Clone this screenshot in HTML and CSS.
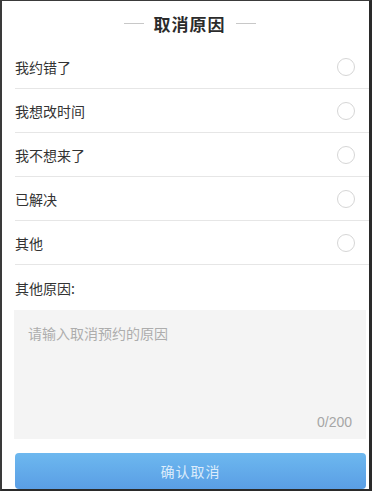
FILE: index.html
```html
<!DOCTYPE html>
<html lang="zh">
<head>
<meta charset="utf-8">
<link rel="stylesheet" href="styles.css">
</head>
<body>
<div class="frame">
  <div class="title">
    <span class="dash"></span>
    <span class="title-text">取消原因</span>
    <span class="dash"></span>
  </div>
  <ul class="options">
    <li class="option"><span>我约错了</span><span class="radio"></span></li>
    <li class="option"><span>我想改时间</span><span class="radio"></span></li>
    <li class="option"><span>我不想来了</span><span class="radio"></span></li>
    <li class="option"><span>已解决</span><span class="radio"></span></li>
    <li class="option"><span>其他</span><span class="radio"></span></li>
  </ul>
  <div class="label">其他原因:</div>
  <div class="textarea">
    <div class="placeholder">请输入取消预约的原因</div>
    <div class="count">0/200</div>
  </div>
  <div class="button">确认取消</div>
</div>
</body>
</html>
```
FILE: styles.css
```css
* { box-sizing: border-box; }
html, body { margin: 0; padding: 0; }
body {
  font-family: "Noto Sans CJK SC", "Noto Sans", sans-serif;
  color: #333;
  background: #fff;
}
.frame {
  width: 372px;
  height: 491px;
  border-top: 1px solid #3a3a3a;
  border-left: 2px solid #3a3a3a;
  border-right: 3px solid #2a2a2a;
  border-bottom: 2px solid #2a2a2a;
  display: flex;
  flex-direction: column;
  overflow: hidden;
}
.title {
  height: 44px;
  display: flex;
  align-items: center;
  justify-content: center;
  gap: 10px;
  margin-left: 8px;
}
.title-text {
  font-size: 17px;
  font-weight: bold;
  color: #2b2b2b;
  letter-spacing: 1px;
}
.dash {
  width: 20px;
  height: 1px;
  background: #c8c8c8;
}
.options {
  list-style: none;
  margin: 0 0 0 13px;
  padding: 0;
}
.option {
  height: 44px;
  border-bottom: 1px solid #e6e6e6;
  display: flex;
  align-items: center;
  justify-content: space-between;
  font-size: 14px;
  color: #333;
  padding-right: 14px;
}
.radio {
  width: 18px;
  height: 18px;
  border: 1px solid #d6d6d6;
  border-radius: 50%;
}
.label {
  height: 45px;
  display: flex;
  align-items: center;
  padding-left: 13px;
  font-size: 14px;
  color: #333;
}
.textarea {
  margin: 0 3px 0 12px;
  height: 129px;
  background: #f4f4f4;
  padding: 13px 14px 9px 14px;
  display: flex;
  flex-direction: column;
  justify-content: space-between;
}
.placeholder {
  font-size: 14px;
  color: #adadad;
  line-height: 20px;
}
.count {
  text-align: right;
  font-size: 14px;
  color: #a6a6a6;
  font-family: "Liberation Sans", sans-serif;
}
.button {
  margin: 14px 3px 0 13px;
  height: 36px;
  border-radius: 4px;
  background: linear-gradient(#6db8ef, #5a9ee5);
  color: #dcecfb;
  font-size: 14px;
  display: flex;
  align-items: center;
  justify-content: center;
  letter-spacing: 1px;
}
```
